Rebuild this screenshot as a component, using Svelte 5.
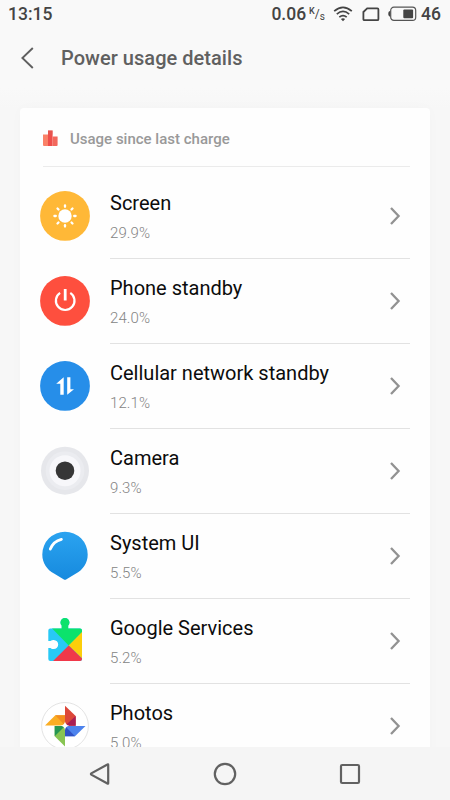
<script>
  const apps = [
    { icon: "screen", name: "Screen", usage: "29.9%" },
    { icon: "power", name: "Phone standby", usage: "24.0%" },
    { icon: "network", name: "Cellular network standby", usage: "12.1%" },
    { icon: "camera", name: "Camera", usage: "9.3%" },
    { icon: "system", name: "System UI", usage: "5.5%" },
    { icon: "services", name: "Google Services", usage: "5.2%" },
    { icon: "photos", name: "Photos", usage: "5.0%" },
  ];
  const rays = [0, 45, 90, 135, 180, 225, 270, 315];
</script>

<div class="phone">
  <div class="status">
    <span class="status__time">13:15</span>
    <span class="status__speed">0.06</span>
    <span class="status__unit"><sup>K</sup>/<sub>s</sub></span>
    <svg class="status__wifi" width="20" height="16" viewBox="0 0 20 16" fill="none" stroke="#444" stroke-width="1.7">
      <path d="M1.2 5.2Q10-2.6 18.8 5.2M3.8 8.2Q10 2.7 16.2 8.2M6.3 11.1Q10 8 13.7 11.1" />
      <path d="M7.9 12.9Q10 11.4 12.1 12.9L10 15.2Z" fill="#444" stroke="none" />
    </svg>
    <svg class="status__sim" width="18" height="15" viewBox="0 0 18 15" fill="none" stroke="#444" stroke-width="1.8">
      <path d="M5.2 1.4H15.4Q16.4 1.4 16.4 2.4V12.2Q16.4 13.2 15.4 13.2H2.4Q1.4 13.2 1.4 12.2V5Z" />
    </svg>
    <svg class="status__battery" width="29" height="16" viewBox="0 0 29 16">
      <rect x="2.7" y="1.2" width="25" height="13.2" rx="3.2" fill="none" stroke="#555" stroke-width="1.2" />
      <path d="M2.2 5Q.3 5 .3 7.8T2.2 10.6Z" fill="#444" />
      <rect x="15.3" y="3.4" width="9.8" height="8.8" rx="1" fill="#444" />
    </svg>
    <span class="status__level">46</span>
  </div>

  <header class="header">
    <svg width="14" height="22" viewBox="0 0 14 22" fill="none" stroke="#606060" stroke-width="1.9">
      <path d="M12.8 1L2.4 11L12.8 21" />
    </svg>
    <h1>Power usage details</h1>
  </header>

  <main class="content">
    <section class="card">
      <div class="card__title">
        <svg width="16" height="18" viewBox="0 0 16 18">
          <path d="M0 4.5H5V16H1Q0 16 0 15Z" fill="#fa8168" />
          <path d="M5 .5H9.6V16H5Z" fill="#ee4e4a" />
          <path d="M9.6 6.5H14.6V15Q14.6 16 13.6 16H9.6Z" fill="#f2685d" />
          <path d="M5 .5H9.6V4.5H5Z" fill="#de5b54" opacity=".5" />
        </svg>
        <span>Usage since last charge</span>
      </div>

      <ul class="list">
        {#each apps as app (app.icon)}
          <li class="row">
            <svg class="row__icon" width="50" height="50" viewBox="0 0 50 50">
              {#if app.icon === "screen"}
                <circle cx="25" cy="24.9" r="24.9" fill="#ffb837" />
                <circle cx="25" cy="25" r="6.7" fill="#fff" />
                {#each rays as angle}
                  <path d="M25 14.4V15.8" transform="rotate({angle} 25 25)" stroke="#fff" stroke-width="2.3" stroke-linecap="round" />
                {/each}
              {:else if app.icon === "power"}
                <circle cx="25" cy="24.9" r="24.9" fill="#fe4f3e" />
                <path d="M20.1 16.9A9.3 9.3 0 1 0 30.3 16.9" fill="none" stroke="#fff" stroke-width="2.2" />
                <path d="M25.2 13V24.5" stroke="#fff" stroke-width="2.8" />
              {:else if app.icon === "network"}
                <circle cx="25" cy="24.9" r="24.9" fill="#268ee9" />
                <path d="M23.7 16.3V33.7H20.3V22.8H16.2ZM27.2 16.3H30.4V28.2H34L27.2 33.7Z" fill="#fff" />
              {:else if app.icon === "camera"}
                <circle cx="25" cy="24.7" r="24" fill="#e6e7eb" />
                <circle cx="25" cy="24.7" r="19.3" fill="#ebecf0" />
                <circle cx="25" cy="24.7" r="15.5" fill="#f7f7fa" />
                <circle cx="25" cy="24.7" r="9.3" fill="#363636" />
              {:else if app.icon === "system"}
                <defs>
                  <linearGradient id="bubble" x1="0" y1="0" x2="0" y2="1">
                    <stop offset="0" stop-color="#2ba3f0" />
                    <stop offset="1" stop-color="#168ade" />
                  </linearGradient>
                </defs>
                <path d="M25 .7A22.7 22.7 0 0 1 47.7 23.4C47.7 32 43 38.5 36 42.6L26.5 48.2Q25 49.3 23.5 48.2L14 42.6C7 38.5 2.3 32 2.3 23.4A22.7 22.7 0 0 1 25 .7Z" fill="url(#bubble)" />
                <path d="M10.3 18.1Q13.3 10.4 21.4 8.4" fill="none" stroke="#fff" stroke-width="2.8" stroke-linecap="round" />
              {:else if app.icon === "services"}
                <clipPath id="puzzle">
                  <path d="M10.3 12.4H21.7V9.6A4.5 4.5 0 1 1 28.2 9.6V12.4H40Q42 12.4 42 14.4V43Q42 45 40 45H10.3Q8.3 45 8.3 43V31.9H10.5A4.6 4.6 0 1 0 10.5 25.1H8.3V14.4Q8.3 12.4 10.3 12.4Z" />
                </clipPath>
                <g clip-path="url(#puzzle)">
                  <path d="M0 0H50V50H0Z" fill="#28c9f6" />
                  <path d="M10 10.2L0 0H50V8.8L28.7 29.5Z" fill="#0ce26c" />
                  <path d="M28.7 29.5L50 8V50Z" fill="#fcce0b" />
                  <path d="M28.7 29.5L49.5 50H8Z" fill="#f0384a" />
                </g>
              {:else}
                <circle cx="25" cy="24.9" r="23.4" fill="#fff" stroke="#dcdcdc" stroke-width=".8" />
                <path d="M5 24.5L15.3 14.3H25V24.5Z" fill="#faad24" />
                <path d="M15.3 14.3H25V24.5Z" fill="#f38d20" />
                <path d="M25 4.7L35.7 15V24.8H25Z" fill="#dc4739" />
                <path d="M35.7 15V24.8H25Z" fill="#a91f55" />
                <path d="M45.5 25L35 35.3H25V25Z" fill="#4d83ed" />
                <path d="M35 35.3H25V25Z" fill="#3153c5" />
                <path d="M25 45.5L14.7 35.3V25H25Z" fill="#88c452" />
                <path d="M14.7 35.3V25H25Z" fill="#269652" />
                <path d="M25 20.6Q25.6 24.2 29.2 24.8Q25.6 25.4 25 29Q24.4 25.4 20.8 24.8Q24.4 24.2 25 20.6Z" fill="#fff" />
              {/if}
            </svg>
            <div class="row__body">
              <div class="row__text">
                <span class="row__name">{app.name}</span>
                <span class="row__usage">{app.usage}</span>
              </div>
              <svg class="row__arrow" width="12" height="20" viewBox="0 0 12 20" fill="none" stroke="#929292" stroke-width="2.3">
                <path d="M2 2L9.6 10L2 18" />
              </svg>
            </div>
          </li>
        {/each}
      </ul>
    </section>
  </main>

  <nav class="nav">
    <svg width="24" height="24" viewBox="0 0 24 24"><path d="M20.2 2.8V21.2Q20.2 22 19.4 21.5L3.3 12.6Q2.5 12 3.3 11.4L19.4 2.5Q20.2 2 20.2 2.8Z" /></svg>
    <svg width="24" height="24" viewBox="0 0 24 24"><circle cx="12" cy="12" r="10.2" /></svg>
    <svg width="24" height="24" viewBox="0 0 24 24"><rect x="3" y="3" width="18" height="18" rx="1.2" /></svg>
  </nav>
</div>

<style>
  :global(body) { margin: 0; }
  .phone {
    width: 450px;
    height: 800px;
    display: flex;
    flex-direction: column;
    overflow: hidden;
    background: #f9f9f9;
    font-family: Roboto, "Liberation Sans", sans-serif;
  }
  .status {
    flex: none;
    display: flex;
    align-items: center;
    height: 28px;
    padding: 0 9px 0 8px;
    color: #444;
    font-size: 17.5px;
    font-weight: 500;
  }
  .status__time { margin-right: auto; }
  .status__unit {
    width: 17px;
    margin-left: 3px;
    font-size: 12px;
    font-weight: 400;
    line-height: 16px;
    white-space: nowrap;
  }
  .status__unit sup, .status__unit sub {
    font-size: 9px;
    line-height: 0;
  }
  .status__unit sup { vertical-align: 4px; font-weight: 500; }
  .status__unit sub { vertical-align: -2px; font-size: 10px; }
  .status__wifi { margin-left: 7px; }
  .status__sim { margin-left: 9px; }
  .status__battery { margin: 0 4px 0 8px; }
  .header {
    flex: none;
    display: flex;
    align-items: center;
    height: 60px;
    padding-left: 20px;
  }
  .header h1 {
    margin: 0 0 0 27px;
    color: #606060;
    font-size: 20px;
    font-weight: 500;
    letter-spacing: 0.04px;
  }
  .content {
    flex: 1;
    min-height: 0;
    overflow: hidden;
    padding: 20px 20px 0;
    background: linear-gradient(#f9f9f9, #f7f7f7 20px);
  }
  .card {
    border-radius: 4px;
    background: #fefefe;
    box-shadow: 0 0 14px rgba(0, 0, 0, 0.02);
  }
  .card__title {
    display: flex;
    align-items: center;
    height: 59px;
    box-sizing: border-box;
    margin: 0 20px 0 23px;
    padding-top: 4px;
    border-bottom: 1px solid #ebebeb;
    color: #999;
    font-size: 15px;
    font-weight: 500;
  }
  .card__title span { margin-left: 11px; }
  .list {
    margin: 0;
    padding: 7px 20px 0;
    list-style: none;
  }
  .row {
    display: flex;
    align-items: center;
    height: 85px;
  }
  .row__icon {
    flex: none;
    margin-bottom: 2px;
  }
  .row__body {
    flex: 1;
    display: flex;
    align-items: center;
    justify-content: space-between;
    height: 100%;
    box-sizing: border-box;
    margin-left: 20px;
    padding-right: 9px;
    border-bottom: 1px solid #e2e2e2;
  }
  .row__text {
    display: flex;
    flex-direction: column;
    gap: 8px;
    padding-bottom: 1px;
  }
  .row__name {
    color: #0c0c0c;
    font-size: 20px;
    line-height: 26px;
  }
  .row__usage {
    color: #848484;
    font-size: 15px;
    font-weight: 300;
    letter-spacing: 0.1px;
    line-height: 18px;
  }
  .nav {
    flex: none;
    display: flex;
    align-items: center;
    justify-content: space-between;
    height: 53px;
    padding: 0 88px;
    background: #f5f5f5;
  }
  .nav svg {
    fill: none;
    stroke: #616161;
    stroke-width: 2.2;
  }
</style>
